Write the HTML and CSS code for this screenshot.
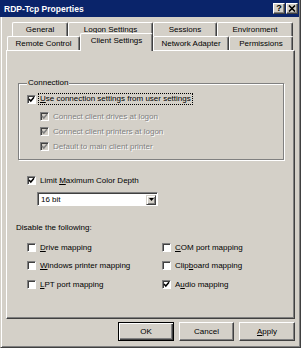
FILE: index.html
```html
<!DOCTYPE html>
<html lang="en">
<head>
  <meta charset="UTF-8" />
  <title>RDP-Tcp Properties</title>
  <link rel="stylesheet" href="styles.css">
</head>
<body>
  <div class="window">
    <div class="titlebar">
      <span class="title">RDP-Tcp Properties</span>
      <div class="caption-buttons">
        <span class="cap-btn help">?</span>
        <span class="cap-btn">
          <svg width="8" height="7" viewBox="0 0 8 7"><path d="M1 0.5 L7 6.5 M7 0.5 L1 6.5" stroke="#000" stroke-width="1.6"/></svg>
        </span>
      </div>
    </div>

    <div class="tabs">
      <div class="tab-row back">
        <div class="tab t-general">General</div>
        <div class="tab t-logon">Logon Settings</div>
        <div class="tab t-sessions">Sessions</div>
        <div class="tab t-env">Environment</div>
      </div>
      <div class="tab-row front">
        <div class="tab t-remote">Remote Control</div>
        <div class="tab t-client selected">Client Settings</div>
        <div class="tab t-network">Network Adapter</div>
        <div class="tab t-perm">Permissions</div>
      </div>
    </div>

    <div class="panel">
      <fieldset class="group">
        <legend>Connection</legend>
        <div class="check first">
          <span class="box"><svg viewBox="0 0 7 7"><polyline points="1,3 2.8,5 6,1.2" /></svg></span>
          <span class="focus"><u>U</u>se connection settings from user settings</span>
        </div>
        <div class="check sub disabled">
          <span class="box"><svg viewBox="0 0 7 7"><polyline points="1,3 2.8,5 6,1.2" /></svg></span>
          <span>Connect client drives at logon</span>
        </div>
        <div class="check sub disabled">
          <span class="box"><svg viewBox="0 0 7 7"><polyline points="1,3 2.8,5 6,1.2" /></svg></span>
          <span>Connect client printers at logon</span>
        </div>
        <div class="check sub disabled">
          <span class="box"><svg viewBox="0 0 7 7"><polyline points="1,3 2.8,5 6,1.2" /></svg></span>
          <span>Default to main client printer</span>
        </div>
      </fieldset>

      <div class="check depth">
        <span class="box"><svg viewBox="0 0 7 7"><polyline points="1,3 2.8,5 6,1.2" /></svg></span>
        <span>Limit <u>M</u>aximum Color Depth</span>
      </div>

      <div class="select">
        <span class="select-value">16 bit</span>
        <span class="select-arrow">
          <svg width="5" height="3" viewBox="0 0 5 3"><path d="M0 0 H5 L2.5 3 Z" fill="#000"/></svg>
        </span>
      </div>

      <div class="disable-label">Disable the following:</div>

      <div class="map-grid">
        <div class="check"><span class="box empty"></span><span><u>D</u>rive mapping</span></div>
        <div class="check"><span class="box empty"></span><span><u>C</u>OM port mapping</span></div>
        <div class="check"><span class="box empty"></span><span><u>W</u>indows printer mapping</span></div>
        <div class="check"><span class="box empty"></span><span>Clip<u>b</u>oard mapping</span></div>
        <div class="check"><span class="box empty"></span><span><u>L</u>PT port mapping</span></div>
        <div class="check">
          <span class="box"><svg viewBox="0 0 7 7"><polyline points="1,3 2.8,5 6,1.2" /></svg></span>
          <span>A<u>u</u>dio mapping</span>
        </div>
      </div>
    </div>

    <div class="buttons">
      <span class="btn default">OK</span>
      <span class="btn cancel">Cancel</span>
      <span class="btn"><u>A</u>pply</span>
    </div>
  </div>
</body>
</html>
```

FILE: styles.css
```css
body {
  margin: 0;
  font-family: "Liberation Sans", Arial, sans-serif;
  font-size: 8px;
  color: #000;
}

.window {
  width: 301px;
  height: 348px;
  box-sizing: border-box;
  background-color: #d4d0c8;
  border-left: 1px solid #d4d0c8;
  border-right: 1px solid #404040;
  border-bottom: 1px solid #404040;
  box-shadow: inset 1px 0 #fff, inset -1px -1px #808080;
  padding: 0 1px 1px 1px;
  display: flex;
  flex-direction: column;
}

/* title bar */
.titlebar {
  height: 17px;
  background-color: #0a246a;
  color: #fff;
  display: flex;
  align-items: center;
  justify-content: space-between;
  padding: 0 1px 0 1px;
  margin-left: -2px;
}

.title {
  font-weight: bold;
  font-size: 8.5px;
  padding-left: 3px;
}

.caption-buttons {
  display: flex;
  gap: 1px;
}

.cap-btn {
  width: 12px;
  height: 11px;
  box-sizing: border-box;
  background-color: #d4d0c8;
  border: 1px solid;
  border-color: #fff #404040 #404040 #fff;
  box-shadow: inset -1px -1px #808080;
  display: flex;
  align-items: center;
  justify-content: center;
  color: #000;
  font-weight: bold;
  font-size: 9px;
  line-height: 9px;
}

/* tabs */
.tabs {
  margin-top: 5px;
  padding-left: 5px;
}

.tab-row {
  display: flex;
  height: 14px;
}

.tab-row.back {
  margin-left: 5px;
}

.tab-row.front {
  position: relative;
  z-index: 1;
}

.tab {
  box-sizing: border-box;
  height: 14px;
  border-top: 1px solid #fff;
  border-left: 1px solid #fff;
  border-right: 1px solid #404040;
  box-shadow: inset -1px 0 #808080;
  border-radius: 2px 2px 0 0;
  text-align: center;
  line-height: 13px;
  white-space: nowrap;
}

.t-general { width: 56px; }
.t-logon { width: 85px; }
.t-sessions { width: 64px; }
.t-env { width: 76px; }

.t-remote { width: 73px; }
.t-client { width: 73px; }
.t-network { width: 76px; }
.t-perm { width: 64px; }

.tab.selected {
  height: 18px;
  margin-top: -3px;
  margin-bottom: -1px;
  line-height: 14px;
  background-color: #d4d0c8;
}

/* page panel */
.panel {
  height: 269px;
  box-sizing: border-box;
  margin: 0 4px 0 4px;
  border: 1px solid;
  border-color: #fff #404040 #404040 #fff;
  box-shadow: inset -1px -1px #808080;
}

.group {
  margin: 27px 0 0 11px;
  width: 266px;
  box-sizing: border-box;
  padding: 4px 0 5px 8px;
  border: 1px solid #808080;
  box-shadow: inset 1px 1px #fff, 1px 1px #fff;
}

.group legend {
  padding: 0 1px;
  margin-left: 0;
  line-height: 10px;
  background-color: #d4d0c8;
}

.check {
  display: flex;
  align-items: center;
  height: 14px;
  white-space: nowrap;
}

.group .check {
  margin-bottom: 1px;
}

.group .check.first {
  margin-bottom: 3px;
}

.check.sub {
  margin-left: 13px;
}

.box {
  width: 9px;
  height: 9px;
  box-sizing: border-box;
  flex-shrink: 0;
  margin-right: 4px;
  background-color: #fff;
  border: 1px solid;
  border-color: #808080 #fff #fff #808080;
  box-shadow: inset 1px 1px #404040;
  display: flex;
}

.box svg {
  width: 7px;
  height: 7px;
  fill: none;
  stroke: #000;
  stroke-width: 1.5;
}

.focus {
  outline: 1px dotted #000;
  outline-offset: 0;
  padding: 0 1px;
  margin-left: -1px;
  line-height: 10px;
}

.disabled {
  color: #808080;
  text-shadow: 1px 1px 0 #fff;
}

.disabled .box {
  background-color: #d4d0c8;
}

.disabled .box svg {
  stroke: #808080;
}

.depth {
  margin: 13px 0 0 20px;
}

.select {
  margin: 5px 0 0 30px;
  width: 121px;
  height: 14px;
  box-sizing: border-box;
  background-color: #fff;
  border: 1px solid;
  border-color: #808080 #fff #fff #808080;
  box-shadow: inset 1px 1px #404040;
  display: flex;
  align-items: center;
  justify-content: space-between;
  padding: 1px 1px 0 3px;
}

.select-arrow {
  width: 10px;
  height: 10px;
  box-sizing: border-box;
  background-color: #d4d0c8;
  border: 1px solid;
  border-color: #d4d0c8 #404040 #404040 #d4d0c8;
  box-shadow: inset 1px 1px #fff, inset -1px -1px #808080;
  display: flex;
  align-items: center;
  justify-content: center;
}

.disable-label {
  margin: 15px 0 0 9px;
  height: 14px;
  line-height: 14px;
}

.map-grid {
  display: grid;
  grid-template-columns: 135px 1fr;
  grid-auto-rows: 14px;
  row-gap: 4.5px;
  margin: 5px 0 0 20px;
}

/* bottom buttons */
.buttons {
  display: flex;
  justify-content: flex-end;
  gap: 5px;
  margin-top: 3px;
  padding-right: 4px;
}

.btn {
  width: 56px;
  height: 19px;
  box-sizing: border-box;
  border: 1px solid;
  border-color: #fff #404040 #404040 #fff;
  box-shadow: inset -1px -1px #808080;
  display: flex;
  align-items: center;
  justify-content: center;
}

.btn.cancel {
  width: 55px;
}

.btn.default {
  border: 1px solid #000;
  box-shadow: inset 1px 1px #fff, inset -1px -1px #404040, inset -2px -2px #808080;
}
```
